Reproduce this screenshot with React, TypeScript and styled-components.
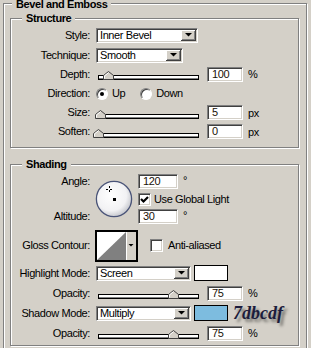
import React from "react";
import styled, { createGlobalStyle } from "styled-components";

const Global = createGlobalStyle`
  html, body { margin: 0; padding: 0; background: #d4d0c8; overflow: hidden; }
  body {
    font-family: "Liberation Sans", Arial, sans-serif;
    font-size: 11px;
    letter-spacing: -0.4px;
    color: #000;
  }
  #root { width: 311px; height: 348px; overflow: hidden; }
`;

const Group = styled.div<{ $w: number; $h?: number; $mt: number; $ml: number; $pb?: number }>`
  box-sizing: border-box;
  width: ${(p) => p.$w}px;
  ${(p) => (p.$h ? `height: ${p.$h}px;` : "")}
  margin: ${(p) => p.$mt}px 0 0 ${(p) => p.$ml}px;
  padding-bottom: ${(p) => p.$pb ?? 0}px;
  border: 1px solid #808080;
  box-shadow: inset 1px 1px 0 #fff, 1px 1px 0 #fff;
`;

const Title = styled.div<{ $mt: number; $ml: number; $lh: number }>`
  width: fit-content;
  margin: ${(p) => p.$mt}px 0 0 ${(p) => p.$ml}px;
  padding: 0 4px;
  background: #d4d0c8;
  font-weight: bold;
  line-height: ${(p) => p.$lh}px;
  white-space: nowrap;
`;

const Row = styled.div<{ $h: number; $mt?: number }>`
  display: flex;
  align-items: center;
  height: ${(p) => p.$h}px;
  margin-top: ${(p) => p.$mt ?? 0}px;
`;

const Label = styled.div<{ $gap?: number }>`
  flex: none;
  width: 79px;
  margin-right: ${(p) => p.$gap ?? 6}px;
  text-align: right;
  white-space: nowrap;
  line-height: 13px;
`;

const Sunken = styled.div`
  box-sizing: border-box;
  background: #fff;
  border: 1px solid;
  border-color: #808080 #fff #fff #808080;
  box-shadow: inset 1px 1px 0 #404040, inset -1px -1px 0 #d4d0c8;
`;

const ComboBox = styled(Sunken)<{ $w: number }>`
  flex: none;
  display: flex;
  width: ${(p) => p.$w}px;
  height: 15px;
  padding: 1px;
`;

const ComboText = styled.div`
  flex: 1;
  padding-left: 2px;
  line-height: 11px;
  white-space: nowrap;
  overflow: hidden;
`;

const ComboButton = styled.div`
  flex: none;
  width: 15px;
  height: 11px;
  background: #d4d0c8;
  box-shadow: inset -1px -1px 0 #404040, inset 1px 1px 0 #fff, inset -2px -2px 0 #808080;
  display: flex;
  align-items: center;
  justify-content: center;
`;

const Field = styled(Sunken)<{ $w: number }>`
  flex: none;
  width: ${(p) => p.$w}px;
  height: 15px;
  padding-left: 4px;
  line-height: 12px;
  color: #1a1208;
`;

const Unit = styled.div<{ $top?: boolean }>`
  margin-left: 5px;
  line-height: 12px;
  ${(p) => (p.$top ? "align-self: flex-start;" : "")}
`;

const SliderBox = styled.div`
  position: relative;
  flex: none;
  display: flex;
  align-items: flex-end;
  width: 101px;
  height: 9px;
  margin: 3px 8px 0 2px;
`;

const Track = styled.div`
  box-sizing: border-box;
  width: 100%;
  height: 5px;
  background: #fff;
  border: 1px solid #000;
  box-shadow: inset 0 -1px 0 #808080;
`;

const Thumb = styled.svg`
  position: absolute;
  top: 0;
  display: block;
`;

const RadioGroup = styled.div`
  display: flex;
  align-items: center;
  gap: 15px;
`;

const RadioOption = styled.div`
  display: flex;
  align-items: center;
  gap: 4px;
  line-height: 13px;
`;

const RadioCircle = styled.span<{ $on?: boolean }>`
  box-sizing: border-box;
  width: 12px;
  height: 12px;
  border-radius: 50%;
  border: 1px solid;
  border-color: #808080 #fff #fff #808080;
  background: #fff;
  box-shadow: inset 1px 1px 0 #404040;
  display: flex;
  align-items: center;
  justify-content: center;
  &::after {
    content: "";
    width: 4px;
    height: 4px;
    border-radius: 50%;
    background: ${(p) => (p.$on ? "#000" : "transparent")};
  }
`;

const CheckBox = styled(Sunken)`
  flex: none;
  width: 13px;
  height: 13px;
  display: flex;
  align-items: center;
  justify-content: center;
`;

const CheckText = styled.div<{ $gap: number }>`
  margin-left: ${(p) => p.$gap}px;
  line-height: 13px;
  white-space: nowrap;
`;

const AngleBlock = styled.div`
  display: flex;
  margin-top: 3px;
  height: 50px;
`;

const StackLabels = styled.div`
  flex: none;
  width: 79px;
  margin-right: 5px;
  display: flex;
  flex-direction: column;
  justify-content: space-between;
  text-align: right;
  line-height: 15px;
`;

const DialSvg = styled.svg`
  display: block;
  flex: none;
  margin-top: 6px;
`;

const DialSide = styled.div`
  margin-left: 5px;
  display: flex;
  flex-direction: column;
`;

const SideRow = styled.div<{ $h: number }>`
  display: flex;
  align-items: center;
  height: ${(p) => p.$h}px;
`;

const ContourSvg = styled.svg`
  display: block;
  flex: none;
  margin-left: -1px;
`;

const CheckWrap = styled.div<{ $ml: number }>`
  display: flex;
  align-items: center;
  margin-left: ${(p) => p.$ml}px;
`;

const Swatch = styled.div<{ $color: string }>`
  box-sizing: border-box;
  flex: none;
  width: 34px;
  height: 16px;
  margin-left: 3px;
  border: 1px solid #000;
  background: ${(p) => p.$color};
`;

const ColorCode = styled.div`
  margin-left: 5px;
  font-family: "Liberation Serif", "Times New Roman", serif;
  font-style: italic;
  font-weight: bold;
  font-size: 18px;
  letter-spacing: 0;
  line-height: 20px;
  color: #1c1c3c;
  text-shadow: 3px 3px 3px rgba(0, 0, 0, 0.45);
`;

function Arrow() {
  return (
    <svg width="7" height="4" viewBox="0 0 7 4">
      <polygon points="0,0 7,0 3.5,3.5" fill="#000" />
    </svg>
  );
}

function Dropdown({ w, value }: { w: number; value: string }) {
  return (
    <ComboBox $w={w}>
      <ComboText>{value}</ComboText>
      <ComboButton>
        <Arrow />
      </ComboButton>
    </ComboBox>
  );
}

function Slider({ pct }: { pct: number }) {
  return (
    <SliderBox>
      <Track />
      <Thumb width="11" height="9" viewBox="0 0 11 9" style={{ left: pct - 5 }}>
        <path d="M0.5 8.5 V4.5 L5.5 0.5 L10.5 4.5 V8.5 Z" fill="#d4d0c8" stroke="#404040" />
        <path d="M1.5 7.5 V4.9 L5.5 1.7" fill="none" stroke="#fff" />
      </Thumb>
    </SliderBox>
  );
}

function SliderRow({ label, pct, value, unit }: { label: string; pct: number; value: string; unit: string }) {
  return (
    <>
      <Label>{label}</Label>
      <Slider pct={pct} />
      <Field $w={36}>{value}</Field>
      <Unit>{unit}</Unit>
    </>
  );
}

function Tick() {
  return (
    <svg width="9" height="9" viewBox="0 0 9 9">
      <polyline points="1,4 3.5,6.5 8,2" fill="none" stroke="#000" strokeWidth="2.2" />
    </svg>
  );
}

function Dial({ angle }: { angle: number }) {
  const r = 11;
  const a = (angle * Math.PI) / 180;
  const cx = 19 + r * Math.cos(a);
  const cy = 19 - r * Math.sin(a);
  return (
    <DialSvg width="38" height="38" viewBox="0 0 38 38">
      <defs>
        <radialGradient id="dialFill" cx="0.42" cy="0.4" r="0.62">
          <stop offset="0" stopColor="#ffffff" />
          <stop offset="0.7" stopColor="#f2f2f4" />
          <stop offset="1" stopColor="#c4c6cc" />
        </radialGradient>
      </defs>
      <circle cx="19" cy="19" r="17.6" fill="url(#dialFill)" stroke="#4a5478" strokeWidth="1.3" />
      <rect x="18" y="18" width="3" height="3" fill="#000" />
      <g stroke="#000" strokeWidth="1" shapeRendering="crispEdges">
        <line x1={cx - 3} y1={Math.round(cy) + 0.5} x2={cx - 1} y2={Math.round(cy) + 0.5} />
        <line x1={cx + 1} y1={Math.round(cy) + 0.5} x2={cx + 3} y2={Math.round(cy) + 0.5} />
        <line x1={Math.round(cx) + 0.5} y1={cy - 3} x2={Math.round(cx) + 0.5} y2={cy - 1} />
        <line x1={Math.round(cx) + 0.5} y1={cy + 1} x2={Math.round(cx) + 0.5} y2={cy + 3} />
      </g>
    </DialSvg>
  );
}

function Contour() {
  return (
    <ContourSvg width="43" height="32" viewBox="0 0 43 32">
      <rect x="0" y="0" width="43" height="32" fill="#000" />
      <rect x="2" y="2" width="29" height="28" fill="#fff" />
      <polygon points="2,30 31,2 31,30" fill="#808080" />
      <rect x="31" y="2" width="10" height="28" fill="#d4d0c8" />
      <rect x="31" y="2" width="1" height="28" fill="#fff" />
      <polygon points="33.5,14 38.5,14 36,16.5" fill="#000" />
    </ContourSvg>
  );
}

export default function App() {
  return (
    <>
      <Global />
      <Group $w={304} $h={400} $mt={3} $ml={3}>
        <Title $mt={-4} $ml={8} $lh={9}>Bevel and Emboss</Title>

        <Group $w={289} $mt={9} $ml={6} $pb={5}>
          <Title $mt={-7} $ml={11} $lh={13}>Structure</Title>
          <Row $h={20}>
            <Label>Style:</Label>
            <Dropdown w={102} value="Inner Bevel" />
          </Row>
          <Row $h={20}>
            <Label>Technique:</Label>
            <Dropdown w={87} value="Smooth" />
          </Row>
          <Row $h={18}>
            <SliderRow label="Depth:" pct={10} value="100" unit="%" />
          </Row>
          <Row $h={21}>
            <Label>Direction:</Label>
            <RadioGroup>
              <RadioOption>
                <RadioCircle $on />
                <span>Up</span>
              </RadioOption>
              <RadioOption>
                <RadioCircle />
                <span>Down</span>
              </RadioOption>
            </RadioGroup>
          </Row>
          <Row $h={17}>
            <SliderRow label="Size:" pct={2} value="5" unit="px" />
          </Row>
          <Row $h={21}>
            <SliderRow label="Soften:" pct={0} value="0" unit="px" />
          </Row>
        </Group>

        <Group $w={289} $mt={16} $ml={6} $pb={2}>
          <Title $mt={-7} $ml={11} $lh={13}>Shading</Title>
          <AngleBlock>
            <StackLabels>
              <div>Angle:</div>
              <div>Altitude:</div>
            </StackLabels>
            <Dial angle={120} />
            <DialSide>
              <SideRow $h={15}>
                <Field $w={40}>120</Field>
                <Unit $top>°</Unit>
              </SideRow>
              <SideRow $h={20}>
                <CheckBox>
                  <Tick />
                </CheckBox>
                <CheckText $gap={3}>Use Global Light</CheckText>
              </SideRow>
              <SideRow $h={15}>
                <Field $w={40}>30</Field>
                <Unit $top>°</Unit>
              </SideRow>
            </DialSide>
          </AngleBlock>

          <Row $h={31} $mt={6}>
            <Label>Gloss Contour:</Label>
            <Contour />
            <CheckWrap $ml={12}>
              <CheckBox />
              <CheckText $gap={5}>Anti-aliased</CheckText>
            </CheckWrap>
          </Row>
          <Row $h={20} $mt={2}>
            <Label>Highlight Mode:</Label>
            <Dropdown w={95} value="Screen" />
            <Swatch $color="#ffffff" />
          </Row>
          <Row $h={20}>
            <SliderRow label="Opacity:" pct={75} value="75" unit="%" />
          </Row>
          <Row $h={20}>
            <Label>Shadow Mode:</Label>
            <Dropdown w={95} value="Multiply" />
            <Swatch $color="#7dbcdf" />
            <ColorCode>7dbcdf</ColorCode>
          </Row>
          <Row $h={20}>
            <SliderRow label="Opacity:" pct={75} value="75" unit="%" />
          </Row>
        </Group>
      </Group>
    </>
  );
}
